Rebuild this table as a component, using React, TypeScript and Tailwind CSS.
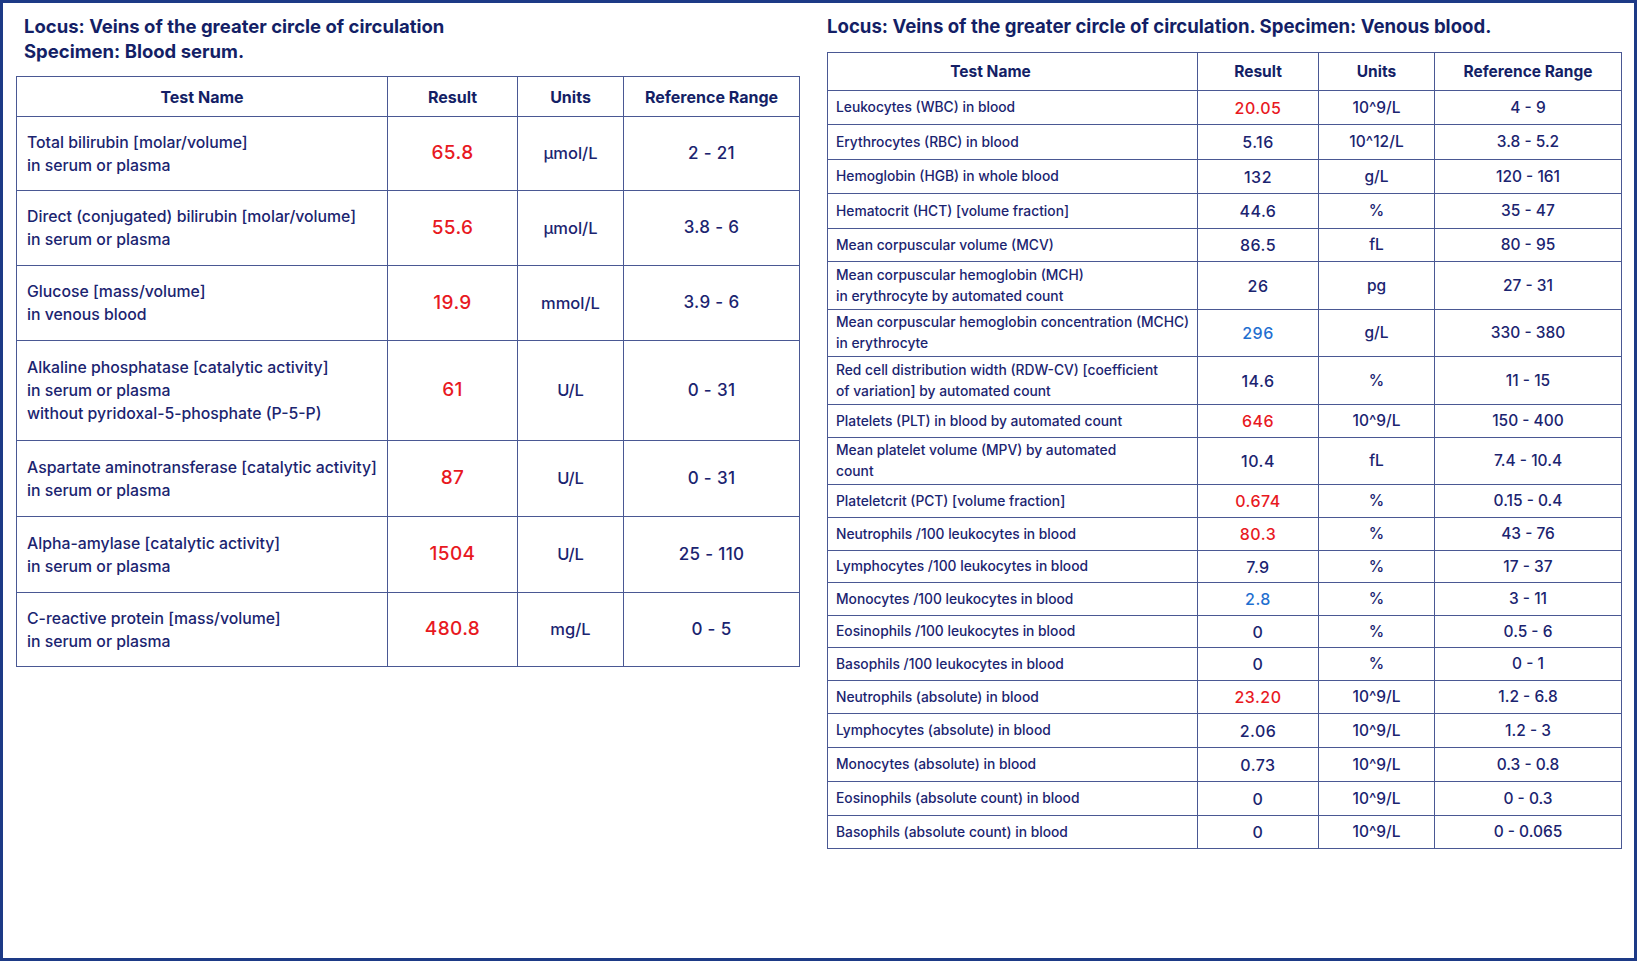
import React from "react"

type Flag = "high" | "low" | undefined

interface Row {
  name: string[]
  result: string
  units: string
  range: string
  flag?: Flag
  h: number
}

const serum: Row[] = [
  { name: ["Total bilirubin [molar/volume]", "in serum or plasma"], result: "65.8", units: "µmol/L", range: "2 - 21", flag: "high", h: 74 },
  { name: ["Direct (conjugated) bilirubin [molar/volume]", "in serum or plasma"], result: "55.6", units: "µmol/L", range: "3.8 - 6", flag: "high", h: 75 },
  { name: ["Glucose [mass/volume]", "in venous blood"], result: "19.9", units: "mmol/L", range: "3.9 - 6", flag: "high", h: 75 },
  {
    name: ["Alkaline phosphatase [catalytic activity]", "in serum or plasma", "without pyridoxal-5-phosphate (P-5-P)"],
    result: "61",
    units: "U/L",
    range: "0 - 31",
    flag: "high",
    h: 100,
  },
  { name: ["Aspartate aminotransferase [catalytic activity]", "in serum or plasma"], result: "87", units: "U/L", range: "0 - 31", flag: "high", h: 76 },
  { name: ["Alpha-amylase [catalytic activity]", "in serum or plasma"], result: "1504", units: "U/L", range: "25 - 110", flag: "high", h: 76 },
  { name: ["C-reactive protein [mass/volume]", "in serum or plasma"], result: "480.8", units: "mg/L", range: "0 - 5", flag: "high", h: 74 },
]

const blood: Row[] = [
  { name: ["Leukocytes (WBC) in blood"], result: "20.05", units: "10^9/L", range: "4 - 9", flag: "high", h: 34 },
  { name: ["Erythrocytes (RBC) in blood"], result: "5.16", units: "10^12/L", range: "3.8 - 5.2", h: 35 },
  { name: ["Hemoglobin (HGB) in whole blood"], result: "132", units: "g/L", range: "120 - 161", h: 34 },
  { name: ["Hematocrit (HCT) [volume fraction]"], result: "44.6", units: "%", range: "35 - 47", h: 35 },
  { name: ["Mean corpuscular volume (MCV)"], result: "86.5", units: "fL", range: "80 - 95", h: 33 },
  { name: ["Mean corpuscular hemoglobin (MCH)", "in erythrocyte by automated count"], result: "26", units: "pg", range: "27 - 31", h: 48 },
  { name: ["Mean corpuscular hemoglobin concentration (MCHC)", "in erythrocyte"], result: "296", units: "g/L", range: "330 - 380", flag: "low", h: 47 },
  { name: ["Red cell distribution width (RDW-CV) [coefficient", "of variation] by automated count"], result: "14.6", units: "%", range: "11 - 15", h: 48 },
  { name: ["Platelets (PLT) in blood by automated count"], result: "646", units: "10^9/L", range: "150 - 400", flag: "high", h: 33 },
  { name: ["Mean platelet volume (MPV) by automated", "count"], result: "10.4", units: "fL", range: "7.4 - 10.4", h: 47 },
  { name: ["Plateletcrit (PCT) [volume fraction]"], result: "0.674", units: "%", range: "0.15 - 0.4", flag: "high", h: 33 },
  { name: ["Neutrophils /100 leukocytes in blood"], result: "80.3", units: "%", range: "43 - 76", flag: "high", h: 33 },
  { name: ["Lymphocytes /100 leukocytes in blood"], result: "7.9", units: "%", range: "17 - 37", h: 32 },
  { name: ["Monocytes /100 leukocytes in blood"], result: "2.8", units: "%", range: "3 - 11", flag: "low", h: 33 },
  { name: ["Eosinophils /100 leukocytes in blood"], result: "0", units: "%", range: "0.5 - 6", h: 32 },
  { name: ["Basophils /100 leukocytes in blood"], result: "0", units: "%", range: "0 - 1", h: 33 },
  { name: ["Neutrophils (absolute) in blood"], result: "23.20", units: "10^9/L", range: "1.2 - 6.8", flag: "high", h: 33 },
  { name: ["Lymphocytes (absolute) in blood"], result: "2.06", units: "10^9/L", range: "1.2 - 3", h: 34 },
  { name: ["Monocytes (absolute) in blood"], result: "0.73", units: "10^9/L", range: "0.3 - 0.8", h: 34 },
  { name: ["Eosinophils (absolute count) in blood"], result: "0", units: "10^9/L", range: "0 - 0.3", h: 34 },
  { name: ["Basophils (absolute count) in blood"], result: "0", units: "10^9/L", range: "0 - 0.065", h: 33 },
]

function flagColor(flag: Flag) {
  if (flag === "high") return "text-[#e8191f]"
  if (flag === "low") return "text-[#1f6fd0]"
  return "text-[#1b2470]"
}

export default function App() {
  return (
    <div
      className="w-[1637px] h-[961px] bg-white border-[3px] border-[#1d3a86] flex pt-[11px] text-[#1b2470]"
      style={{ fontFamily: "Inter, 'Open Sans', sans-serif" }}
    >
      {/* serum panel */}
      <div className="ml-[13px] w-[783px] flex flex-col">
        <h2 className="pl-[8px] text-[18.5px] leading-[25px] font-bold text-[#141f66]">
          Locus: Veins of the greater circle of circulation
          <br />
          Specimen: Blood serum.
        </h2>
        <table className="mt-[12px] w-[783px] table-fixed border-collapse">
          <colgroup>
            <col className="w-[371px]" />
            <col className="w-[130px]" />
            <col className="w-[106px]" />
            <col className="w-[176px]" />
          </colgroup>
          <thead>
            <tr className="h-[40px] text-[16px] font-bold text-[#141f66]">
              <th className="border border-[#4a5893] font-bold">Test Name</th>
              <th className="border border-[#4a5893] font-bold">Result</th>
              <th className="border border-[#4a5893] font-bold">Units</th>
              <th className="border border-[#4a5893] font-bold">Reference Range</th>
            </tr>
          </thead>
          <tbody className="font-medium">
            {serum.map((r) => (
              <tr key={r.name[0]} style={{ height: r.h }}>
                <td className="border border-[#4a5893] pl-[10px] text-[15.8px] leading-[23px]">
                  {r.name.map((line) => (
                    <div key={line}>{line}</div>
                  ))}
                </td>
                <td className={`border border-[#4a5893] text-center text-[19px] tracking-[0.02em] ${flagColor(r.flag)}`}>{r.result}</td>
                <td className="border border-[#4a5893] text-center text-[16.5px]">{r.units}</td>
                <td className="border border-[#4a5893] text-center text-[17px] tracking-[0.02em]">{r.range}</td>
              </tr>
            ))}
          </tbody>
        </table>
      </div>

      {/* venous blood panel */}
      <div className="ml-[28px] w-[794px] flex flex-col">
        <h2 className="text-[18.6px] leading-[25px] font-bold text-[#141f66]">
          Locus: Veins of the greater circle of circulation. Specimen: Venous blood.
        </h2>
        <table className="mt-[13px] w-[794px] table-fixed border-collapse">
          <colgroup>
            <col className="w-[370px]" />
            <col className="w-[121px]" />
            <col className="w-[116px]" />
            <col className="w-[187px]" />
          </colgroup>
          <thead>
            <tr className="h-[38px] text-[15.5px] font-bold text-[#141f66]">
              <th className="border border-[#4a5893] pr-[44px] font-bold">Test Name</th>
              <th className="border border-[#4a5893] font-bold">Result</th>
              <th className="border border-[#4a5893] font-bold">Units</th>
              <th className="border border-[#4a5893] font-bold">Reference Range</th>
            </tr>
          </thead>
          <tbody className="font-medium">
            {blood.map((r) => (
              <tr key={r.name[0]} style={{ height: r.h }}>
                <td className="border border-[#4a5893] pl-[8px] text-[13.8px] leading-[21px]">
                  {r.name.map((line) => (
                    <div key={line}>{line}</div>
                  ))}
                </td>
                <td className={`border border-[#4a5893] text-center text-[16px] tracking-[0.03em] ${flagColor(r.flag)}`}>{r.result}</td>
                <td className="border border-[#4a5893] text-center text-[15.5px]">{r.units}</td>
                <td className="border border-[#4a5893] text-center text-[15.5px]">{r.range}</td>
              </tr>
            ))}
          </tbody>
        </table>
      </div>
    </div>
  )
}
